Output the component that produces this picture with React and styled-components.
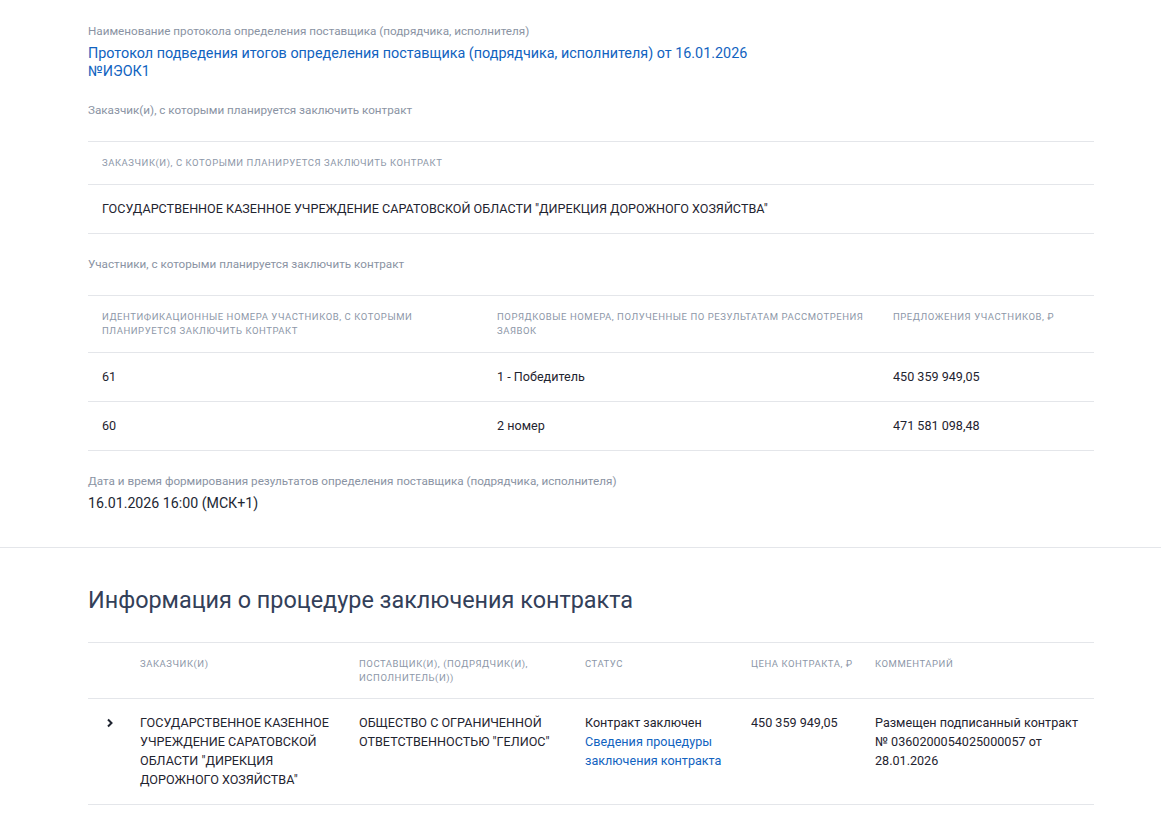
import styled, { createGlobalStyle } from "styled-components";

const GlobalStyle = createGlobalStyle`
  * { box-sizing: border-box; }
  body {
    margin: 0;
    background: #fff;
    font-family: Roboto, "Liberation Sans", sans-serif;
    color: #1f2430;
  }
`;

const Page = styled.div`
  width: 1161px;
`;

const Section = styled.section`
  padding: ${(p) => p.$pad || "0 67px 0 88px"};
  border-bottom: ${(p) => (p.$divider ? "1px solid #e4e6ea" : "none")};
`;

const Field = styled.div`
  display: flex;
  flex-direction: column;
  margin-top: ${(p) => p.$top || 0}px;
`;

const Label = styled.div`
  font-size: 11.7px;
  line-height: 16px;
  color: #8a93a3;
`;

const Link = styled.a`
  color: #1163bf;
  text-decoration: none;
  font-size: ${(p) => p.$size || 12.6}px;
  line-height: ${(p) => p.$lh || 19}px;
  cursor: pointer;
`;

const Value = styled.div`
  font-size: 14.2px;
  line-height: 18px;
  color: #222733;
  margin-top: 5px;
`;

const Table = styled.div`
  margin-top: ${(p) => p.$top || 0}px;
  border-top: 1px solid #e4e6ea;
`;

const Row = styled.div`
  display: grid;
  grid-template-columns: ${(p) => p.$cols};
  border-bottom: 1px solid #e4e6ea;
  align-items: start;
`;

const HeadCell = styled.div`
  padding: ${(p) => (p.$tight ? "14px 4px 13px 14px" : "14px")};
  font-size: 9.5px;
  line-height: 14px;
  letter-spacing: 0.55px;
  text-transform: uppercase;
  color: #8d97a8;
`;

const Cell = styled.div`
  padding: ${(p) => (p.$tight ? "14px 4px 15px 14px" : "14px 14px 15px")};
  font-size: 12.6px;
  line-height: 19px;
  color: #1f2430;
  display: flex;
  flex-direction: column;
`;

const Heading = styled.h2`
  margin: 0;
  font-weight: 400;
  font-size: 23.4px;
  line-height: 30px;
  color: #334059;
`;

const Chevron = styled.span`
  display: flex;
  justify-content: center;
  padding: 17px 0 0 6px;
  color: #1f2430;
`;

const partCols = "395px 396px 1fr";
const contractCols = "38px 219px 226px 166px 124px 1fr";

export default function App() {
  return (
    <Page>
      <GlobalStyle />
      <Section $divider $pad="23px 67px 35px 88px">
        <Field>
          <Label>Наименование протокола определения поставщика (подрядчика, исполнителя)</Label>
          <Link $size={14.37} $lh={18} style={{ marginTop: 6 }}>
            Протокол подведения итогов определения поставщика (подрядчика, исполнителя) от 16.01.2026
            <br />
            №ИЭОК1
          </Link>
        </Field>

        <Field $top={21}>
          <Label>Заказчик(и), с которыми планируется заключить контракт</Label>
        </Field>
        <Table $top={23}>
          <Row $cols="1fr">
            <HeadCell>Заказчик(и), с которыми планируется заключить контракт</HeadCell>
          </Row>
          <Row $cols="1fr">
            <Cell>ГОСУДАРСТВЕННОЕ КАЗЕННОЕ УЧРЕЖДЕНИЕ САРАТОВСКОЙ ОБЛАСТИ "ДИРЕКЦИЯ ДОРОЖНОГО ХОЗЯЙСТВА"</Cell>
          </Row>
        </Table>

        <Field $top={22}>
          <Label>Участники, с которыми планируется заключить контракт</Label>
        </Field>
        <Table $top={23}>
          <Row $cols={partCols}>
            <HeadCell>Идентификационные номера участников, с которыми планируется заключить контракт</HeadCell>
            <HeadCell>Порядковые номера, полученные по результатам рассмотрения заявок</HeadCell>
            <HeadCell>Предложения участников, ₽</HeadCell>
          </Row>
          <Row $cols={partCols}>
            <Cell>61</Cell>
            <Cell>1 - Победитель</Cell>
            <Cell>450 359 949,05</Cell>
          </Row>
          <Row $cols={partCols}>
            <Cell>60</Cell>
            <Cell>2 номер</Cell>
            <Cell>471 581 098,48</Cell>
          </Row>
        </Table>

        <Field $top={22}>
          <Label>Дата и время формирования результатов определения поставщика (подрядчика, исполнителя)</Label>
          <Value>16.01.2026 16:00 (МСК+1)</Value>
        </Field>
      </Section>

      <Section $pad="37px 67px 0 88px">
        <Heading>Информация о процедуре заключения контракта</Heading>
        <Table $top={27}>
          <Row $cols={contractCols}>
            <HeadCell $tight />
            <HeadCell $tight>Заказчик(и)</HeadCell>
            <HeadCell $tight>Поставщик(и), (подрядчик(и), исполнитель(и))</HeadCell>
            <HeadCell $tight>Статус</HeadCell>
            <HeadCell $tight>Цена контракта, ₽</HeadCell>
            <HeadCell $tight>Комментарий</HeadCell>
          </Row>
          <Row $cols={contractCols}>
            <Chevron>
              <svg width="14" height="14" viewBox="0 0 14 14">
                <path d="M5 3.5 L8.5 7 L5 10.5" fill="none" stroke="#1f2430" strokeWidth="2" />
              </svg>
            </Chevron>
            <Cell $tight>ГОСУДАРСТВЕННОЕ КАЗЕННОЕ УЧРЕЖДЕНИЕ САРАТОВСКОЙ ОБЛАСТИ "ДИРЕКЦИЯ ДОРОЖНОГО ХОЗЯЙСТВА"</Cell>
            <Cell $tight>ОБЩЕСТВО С ОГРАНИЧЕННОЙ ОТВЕТСТВЕННОСТЬЮ "ГЕЛИОС"</Cell>
            <Cell $tight>
              Контракт заключен
              <Link>Сведения процедуры заключения контракта</Link>
            </Cell>
            <Cell $tight>450 359 949,05</Cell>
            <Cell $tight>Размещен подписанный контракт № 0360200054025000057 от 28.01.2026</Cell>
          </Row>
        </Table>
      </Section>
    </Page>
  );
}
